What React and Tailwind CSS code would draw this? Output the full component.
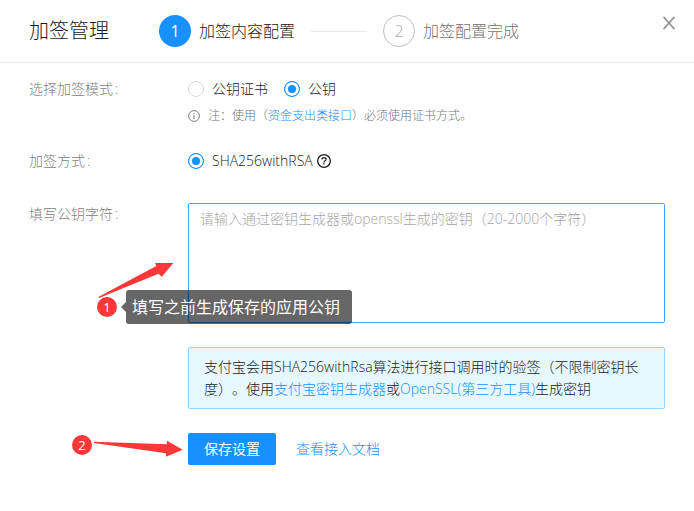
import { useState } from "react";

const fontStack =
  "font-['Open_Sans','Noto_Sans_CJK_SC',sans-serif] font-light [text-spacing-trim:space-all]";

function Row({ label, htmlFor, children }) {
  return (
    <div className="grid grid-cols-[159px_minmax(0,1fr)]">
      <label htmlFor={htmlFor} className="leading-[22px] text-[#808080]">
        {label}
        <span className="pl-0.5">:</span>
      </label>
      <div>{children}</div>
    </div>
  );
}

function Radio({ id, name, checked, onChange, children }) {
  return (
    <label htmlFor={id} className="flex items-center gap-2 leading-[22px]">
      <input
        id={id}
        type="radio"
        name={name}
        checked={checked}
        onChange={onChange}
        className="size-4 appearance-none rounded-full border border-[#d9d9d9] bg-white checked:border-[#1890ff] checked:bg-[#1890ff] checked:shadow-[inset_0_0_0_3px_white]"
      />
      {children}
    </label>
  );
}

function Link({ children }) {
  return (
    <a href="#" className="text-[#1890ff]">
      {children}
    </a>
  );
}

function Marker({ children, className }) {
  return (
    <span
      className={
        "absolute flex size-5 items-center justify-center rounded-full bg-[#fb3838] text-[13px] leading-5 font-normal text-white " +
        className
      }
    >
      {children}
    </span>
  );
}

export default function App() {
  const [mode, setMode] = useState("key");
  return (
    <div className={"min-h-screen bg-white text-sm text-[#1a1a1a] " + fontStack}>
      <header className="flex items-start border-b border-[#e8e8e8] px-[18px] py-[15px] pl-[29px]">
        <h1 className="w-[130px] shrink-0 text-xl leading-8">加签管理</h1>
        <ol className="flex flex-1 items-center text-base">
          <li className="flex items-center gap-2">
            <span className="flex size-8 items-center justify-center rounded-full bg-[#1890ff] font-normal text-white">
              1
            </span>
            加签内容配置
          </li>
          <li aria-hidden="true" className="mx-4 h-px w-14 bg-[#e8e8e8]" />
          <li className="flex items-center gap-2 text-[#737373]">
            <span className="flex size-8 items-center justify-center rounded-full border border-[#bfbfbf] text-[#a6a6a6]">
              2
            </span>
            加签配置完成
          </li>
        </ol>
        <button type="button" aria-label="关闭" className="text-[#8c8c8c]">
          <svg viewBox="0 0 14 16" className="h-4 w-3.5" fill="none" stroke="currentColor">
            <path d="M2 2.5 12 13.5M12 2.5 2 13.5" strokeWidth="1.6" />
            <path d="M.8 2.3h2.6M10.6 2.3h2.6M.8 13.7h2.6M10.6 13.7h2.6" strokeWidth=".8" />
          </svg>
        </button>
      </header>

      <form className="px-[29px] pt-[15px] pb-8" onSubmit={(e) => e.preventDefault()}>
        <Row label="选择加签模式" htmlFor="mode-key">
          <div className="flex gap-4">
            <Radio id="mode-cert" name="mode" checked={mode === "cert"} onChange={() => setMode("cert")}>
              公钥证书
            </Radio>
            <Radio id="mode-key" name="mode" checked={mode === "key"} onChange={() => setMode("key")}>
              公钥
            </Radio>
          </div>
          <p className="mt-1.5 flex items-center gap-2 text-xs leading-5 text-[#737373]">
            <svg viewBox="0 0 12 12" className="size-3 shrink-0" fill="none" stroke="currentColor">
              <circle cx="6" cy="6" r="5.4" strokeWidth=".9" />
              <path d="M6 5.2v3.8M6 3v1.1" />
            </svg>
            <span>
              注：使用（<Link>资金支出类接口</Link>）必须使用证书方式。
            </span>
          </p>
        </Row>

        <div className="mt-6">
          <Row label="加签方式" htmlFor="algo">
            <div className="flex items-center gap-1">
              <Radio id="algo" name="algo" checked onChange={() => {}}>
                SHA256withRSA
              </Radio>
              <svg viewBox="0 0 14 14" className="size-3.5" fill="none" stroke="currentColor">
                <circle cx="7" cy="7" r="6.3" strokeWidth="1.3" />
                <path d="M4.9 5.6c0-1.2.9-1.9 2.1-1.9s2.1.7 2.1 1.8c0 1.4-2.1 1.3-2.1 2.9" strokeWidth="1.2" />
                <path d="M7 9.3v1.3" strokeWidth="1.3" />
              </svg>
            </div>
          </Row>
        </div>

        <div className="relative mt-[31px]">
          <Row label="填写公钥字符" htmlFor="public-key">
            <textarea
              id="public-key"
              placeholder="请输入通过密钥生成器或openssl生成的密钥（20-2000个字符）"
              className="block h-[120px] w-full resize-none rounded-xs border border-[#40a9ff] px-[11px] py-1 leading-[22px] outline-none placeholder:text-[#a6a6a6]"
            />
          </Row>
          <svg viewBox="0 0 76 36" className="absolute top-[60px] left-[69px] h-9 w-[76px]" fill="#fb3838">
            <path d="M75.4 0H57l1.3 3L.3 34l.8 1L60.5 10.7l3.3 3Z" />
          </svg>
          <Marker className="top-[94px] left-[68px]">1</Marker>
          <div
            role="note"
            className="absolute top-[87px] left-[97px] h-[34px] rounded-[3px] bg-black/60 pr-3 pl-1.5 text-base leading-[34px] font-normal text-white"
          >
            <span className="absolute top-3 -left-[5px] border-y-5 border-r-5 border-y-transparent border-r-black/60" />
            填写之前生成保存的应用公钥
          </div>
        </div>

        <div className="mt-6 ml-[159px] rounded-xs border border-[#91d5ff] bg-[#e6f7ff] px-[15px] py-2 leading-[22px]">
          支付宝会用SHA256withRsa算法进行接口调用时的验签（不限制密钥长度）。使用
          <Link>支付宝密钥生成器</Link>或<Link>OpenSSL(第三方工具)</Link>生成密钥
        </div>

        <div className="relative mt-6 flex items-center gap-5 pl-[159px]">
          <button
            type="submit"
            className="h-8 rounded-xs bg-[#1890ff] px-4 font-normal text-white shadow-[0_2px_0_rgba(0,0,0,0.04)]"
          >
            保存设置
          </button>
          <Link>查看接入文档</Link>
          <Marker className="top-0.5 left-[43px]">2</Marker>
          <svg viewBox="0 0 89 17" className="absolute top-[7px] left-[65px] h-[17px] w-[89px]" fill="#fb3838">
            <path d="M0 1.8 72.7 4.3 73 .7l15.7 9L72 16.7v-3.4L0 3Z" />
          </svg>
        </div>
      </form>
    </div>
  );
}
